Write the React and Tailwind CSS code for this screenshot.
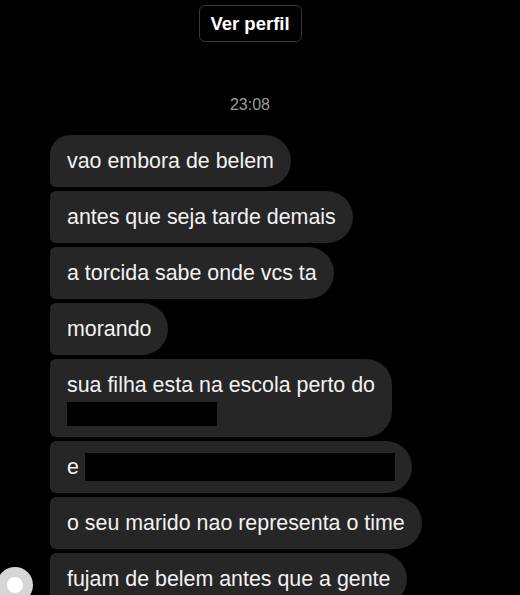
import React from 'react';

const messages = [
  { text: 'vao embora de belem' },
  { text: 'antes que seja tarde demais' },
  { text: 'a torcida sabe onde vcs ta' },
  { text: 'morando' },
  { text: 'sua filha esta na escola perto do', block: 150 },
  { text: 'e', inline: 310 },
  { text: 'o seu marido nao representa o time' },
  { text: 'fujam de belem antes que a gente' },
];

function Bubble({ msg, first }) {
  return (
    <div
      className={
        'self-start bg-[#262626] text-[#f2f2f2] px-[17px] py-[13px] leading-[26px] rounded-r-[26px] ' +
        (first ? 'rounded-tl-[20px] rounded-bl-[6px]' : 'rounded-l-[6px]')
      }
    >
      <div className="flex h-[26px] items-center">
        <span>{msg.text}</span>
        {msg.inline && <span className="ml-[6px] inline-block h-[28px] bg-black" style={{ width: msg.inline }} />}
      </div>
      {msg.block && <div className="-mb-[2px] mt-[4px] h-[24px] bg-black" style={{ width: msg.block }} />}
    </div>
  );
}

export default function App() {
  return (
    <div className="h-[595px] w-[520px] overflow-hidden bg-black font-['Liberation_Sans',Arial,sans-serif]">
      <div className="flex flex-col items-center pt-[5px] pr-[20px]">
        <button className="h-[37px] w-[103px] rounded-[6px] border border-[#383838] text-[18.5px] font-bold text-white">
          Ver perfil
        </button>
        <div className="mt-[53px] text-[16px] leading-[20px] text-[#9b9b9b]">23:08</div>
      </div>

      <div className="mt-[20px] flex">
        <div className="flex w-[50px] items-end">
          <div className="-ml-[3px] mb-[2px] flex h-[36px] w-[36px] items-center justify-center rounded-full bg-[#d6d6d6]">
            <div className="h-[16px] w-[16px] rounded-full bg-white" />
          </div>
        </div>
        <div className="flex flex-col gap-[4px] text-[21.4px]">
          {messages.map((m, i) => (
            <Bubble key={i} msg={m} first={i === 0} />
          ))}
        </div>
      </div>
    </div>
  );
}
